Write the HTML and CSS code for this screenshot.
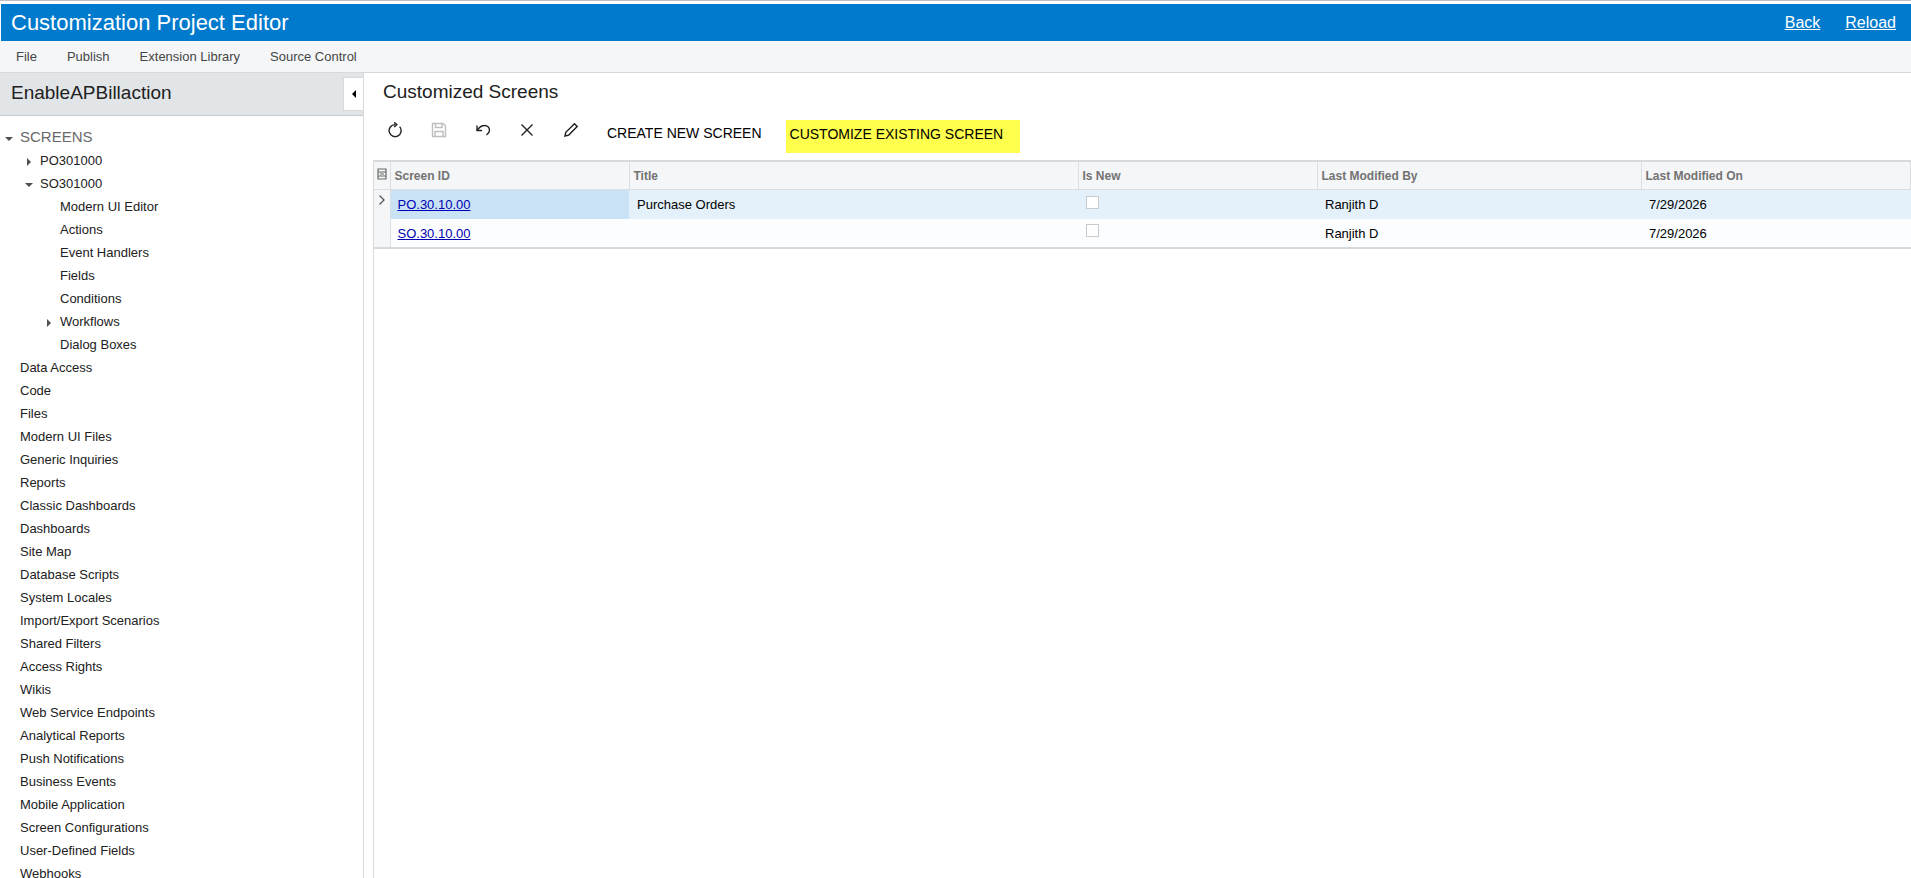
FILE: index.html
```html
<!DOCTYPE html>
<html lang="en">

<head>
    <meta charset="UTF-8">
    <title>Customization Project Editor</title>
    <link rel="stylesheet" href="styles.css">
</head>

<body>
    <header class="topBar">
        <span class="appTitle">Customization Project Editor</span>
        <nav class="topLinks">
            <a href="#">Back</a>
            <a href="#">Reload</a>
        </nav>
    </header>
    <nav class="menuBar">
        <span>File</span>
        <span>Publish</span>
        <span>Extension Library</span>
        <span>Source Control</span>
    </nav>
    <div class="workspace">
        <aside class="sidePanel">
            <div class="projectBar">
                <span class="projectName">EnableAPBillaction</span>
                <button class="collapseBtn"><i class="arrow arrowLeft"></i></button>
            </div>
            <ul class="tree">
                <li class="rootNode"><i class="arrow arrowDown"></i>SCREENS</li>
                <li class="level1"><i class="arrow arrowRight"></i>PO301000</li>
                <li class="level1"><i class="arrow arrowDown"></i>SO301000</li>
                <li class="level2">Modern UI Editor</li>
                <li class="level2">Actions</li>
                <li class="level2">Event Handlers</li>
                <li class="level2">Fields</li>
                <li class="level2">Conditions</li>
                <li class="level2"><i class="arrow arrowRight"></i>Workflows</li>
                <li class="level2">Dialog Boxes</li>
                <li>Data Access</li>
                <li>Code</li>
                <li>Files</li>
                <li>Modern UI Files</li>
                <li>Generic Inquiries</li>
                <li>Reports</li>
                <li>Classic Dashboards</li>
                <li>Dashboards</li>
                <li>Site Map</li>
                <li>Database Scripts</li>
                <li>System Locales</li>
                <li>Import/Export Scenarios</li>
                <li>Shared Filters</li>
                <li>Access Rights</li>
                <li>Wikis</li>
                <li>Web Service Endpoints</li>
                <li>Analytical Reports</li>
                <li>Push Notifications</li>
                <li>Business Events</li>
                <li>Mobile Application</li>
                <li>Screen Configurations</li>
                <li>User-Defined Fields</li>
                <li>Webhooks</li>
            </ul>
        </aside>
        <main class="content">
            <h1 class="pageTitle">Customized Screens</h1>
            <div class="toolbar">
                <button class="toolBtn">
                    <svg viewBox="0 0 16 16"><path d="M12.600 4.600A6 6 0 1 1 8 2.600" /><path d="M7.200 .4 9.800 2.600 7.200 5" /></svg>
                </button>
                <button class="toolBtn disabled">
                    <svg viewBox="0 0 16 16"><path d="M1.500 1.500h10.500l2.500 2.500v10.500H1.500z" /><path d="M4.500 1.500v4h6.500v-4M4 14.500V9.500h8v5" /></svg>
                </button>
                <button class="toolBtn">
                    <svg viewBox="0 0 16 16"><path d="M2 3.500V8.500H7" /><path d="M2 8.500C4 5.500 6.500 3.500 9.500 3.500A4.800 4.800 0 0 1 14.500 8.300C14.500 10.500 13 12 11.500 13" /></svg>
                </button>
                <button class="toolBtn">
                    <svg viewBox="0 0 16 16"><path d="M2.500 2.500l11 11M13.500 2.500l-11 11" /></svg>
                </button>
                <button class="toolBtn">
                    <svg viewBox="0 0 16 16"><path d="M2 14l.8-3.700L11.500 1.800l2.700 2.700-8.500 8.600z" /></svg>
                </button>
                <button class="textBtn">CREATE NEW SCREEN</button>
                <button class="textBtn highlighted">CUSTOMIZE EXISTING SCREEN</button>
            </div>
            <div class="gridPanel">
                <table class="grid">
                    <colgroup>
                        <col class="colMark">
                        <col class="colId">
                        <col class="colTitle">
                        <col class="colNew">
                        <col class="colBy">
                        <col class="colOn">
                    </colgroup>
                    <thead>
                        <tr>
                            <th class="markCell">
                                <svg class="gridIcon" viewBox="0 0 10 12"><path d="M1 1h8v10H1zM1 4h8M1 8h8M3 6h4" /></svg>
                            </th>
                            <th>Screen ID</th>
                            <th>Title</th>
                            <th>Is New</th>
                            <th>Last Modified By</th>
                            <th>Last Modified On</th>
                        </tr>
                    </thead>
                    <tbody>
                        <tr class="activeRow">
                            <td class="markCell">
                                <svg class="rowIcon" viewBox="0 0 8 12"><path d="M1.500 1.500 6 6l-4.500 4.500" /></svg>
                            </td>
                            <td class="activeCell idCell"><a href="#">PO.30.10.00</a></td>
                            <td>Purchase Orders</td>
                            <td><span class="checkBox"></span></td>
                            <td>Ranjith D</td>
                            <td>7/29/2026</td>
                        </tr>
                        <tr class="lastRow">
                            <td class="markCell"></td>
                            <td class="idCell"><a href="#">SO.30.10.00</a></td>
                            <td></td>
                            <td><span class="checkBox"></span></td>
                            <td>Ranjith D</td>
                            <td>7/29/2026</td>
                        </tr>
                    </tbody>
                </table>
            </div>
        </main>
    </div>
</body>

</html>
```
FILE: styles.css
```css
html, body {
    margin: 0;
    height: 100%;
    overflow: hidden;
    background-color: white;
}

body {
    display: flex;
    flex-direction: column;
    font-family: "Liberation Sans", Arial, sans-serif;
    font-size: 13px;
    color: rgb(33, 33, 33);
    border-top: 1px solid rgb(190, 190, 190);
    padding-top: 3px;
    box-sizing: border-box;
}

.topBar {
    flex: none;
    height: 37px;
    margin-left: 1px;
    padding: 0 15px 0 10px;
    display: flex;
    align-items: center;
    justify-content: space-between;
    background-color: rgb(0, 122, 204);
    color: white;
}

.appTitle {
    font-size: 22px;
}

.topLinks {
    display: flex;
    gap: 25px;
}

.topLinks a {
    color: white;
    font-size: 16px;
}

.menuBar {
    flex: none;
    height: 31px;
    padding-left: 16px;
    display: flex;
    align-items: center;
    gap: 30px;
    background-color: rgb(245, 246, 247);
    border-bottom: 1px solid rgb(215, 218, 221);
    color: rgb(70, 70, 70);
}

.workspace {
    flex: 1;
    display: flex;
    min-height: 0;
}

.sidePanel {
    flex: none;
    width: 364px;
    box-sizing: border-box;
    border-right: 1px solid rgb(215, 218, 221);
}

.projectBar {
    height: 42px;
    padding-left: 11px;
    display: flex;
    align-items: center;
    justify-content: space-between;
    background-color: rgb(225, 229, 232);
    border-bottom: 1px solid rgb(200, 203, 206);
    font-size: 19px;
}

.projectName {
    margin-bottom: 2px;
}

.collapseBtn {
    width: 20px;
    height: 34px;
    padding: 0;
    border: 1px solid rgb(215, 218, 221);
    border-right: none;
    background-color: white;
    display: flex;
    align-items: center;
    justify-content: center;
}

.tree {
    list-style: none;
    margin: 10px 0 0 0;
    padding: 0;
}

.tree li {
    height: 23px;
    line-height: 23px;
    padding-left: 20px;
    position: relative;
    white-space: nowrap;
}

.tree .rootNode {
    line-height: 22px;
    color: rgb(105, 105, 105);
    font-size: 15px;
}

.tree .level1 {
    padding-left: 40px;
}

.tree .level2 {
    padding-left: 60px;
}

.arrow {
    position: absolute;
    width: 0;
    height: 0;
    border-style: solid;
    border-color: transparent;
}

.arrowDown {
    top: 11px;
    margin-left: -15px;
    border-width: 4px 4px 0 4px;
    border-top-color: rgb(80, 80, 80);
}

.arrowRight {
    top: 9px;
    margin-left: -13px;
    border-width: 4px 0 4px 4.500px;
    border-left-color: rgb(80, 80, 80);
}

.arrowLeft {
    position: static;
    display: block;
    border-width: 4.500px 4.500px 4.500px 0;
    border-right-color: black;
}

.content {
    flex: 1;
    min-width: 0;
    padding-left: 9px;
    display: flex;
    flex-direction: column;
}

.pageTitle {
    margin: 7px 0 0 10px;
    height: 24px;
    line-height: 24px;
    font-size: 19px;
    font-weight: normal;
}

.toolbar {
    margin-top: 9px;
    height: 41px;
    display: flex;
    align-items: flex-start;
}

.toolBtn {
    width: 44px;
    height: 34px;
    padding: 0;
    border: none;
    background: none;
    display: flex;
    align-items: center;
    justify-content: center;
}

.toolBtn svg {
    width: 16px;
    height: 16px;
    fill: none;
    stroke: rgb(33, 33, 33);
    stroke-width: 1.400;
}

.toolBtn.disabled svg {
    stroke: rgb(190, 190, 190);
}

.textBtn {
    height: 40px;
    margin-left: 10px;
    padding: 0 4px;
    border: none;
    background: none;
    font: inherit;
    font-size: 14px;
    color: black;
}

.textBtn.highlighted {
    width: 234px;
    height: 33px;
    margin: 7px 0 0 20px;
    padding-bottom: 6px;
    text-align: left;
    background-color: rgb(255, 255, 77);
}

.gridPanel {
    flex: 1;
    margin-top: 6px;
    border-left: 1px solid rgb(215, 218, 221);
}

.grid {
    width: 100%;
    table-layout: fixed;
    border-collapse: collapse;
    border-top: 2px solid rgb(215, 218, 221);
    border-bottom: 2px solid rgb(215, 218, 221);
}

.colMark { width: 16px; }
.colId { width: 239px; }
.colTitle { width: 449px; }
.colNew { width: 239px; }
.colBy { width: 324px; }

.grid th {
    height: 27px;
    padding: 0 0 0 4px;
    text-align: left;
    font-size: 12px;
    color: rgb(115, 115, 115);
    background-color: rgb(245, 246, 247);
    border-right: 1px solid rgb(220, 223, 226);
    border-bottom: 1px solid rgb(220, 223, 226);
}

.grid td {
    height: 29px;
    padding: 0 0 0 8px;
    background-color: rgb(251, 253, 254);
    color: black;
}

.grid .lastRow td {
    height: 28px;
}

.grid .idCell {
    padding-left: 7px;
}

.grid .activeRow td {
    background-color: rgb(228, 241, 250);
}

.grid .activeRow .activeCell {
    background-color: rgb(201, 226, 245);
}

.grid .markCell,
.grid .activeRow .markCell {
    padding: 0;
    text-align: center;
    background-color: rgb(245, 246, 247);
    border-right: 1px solid rgb(220, 223, 226);
}

.grid a {
    color: rgb(0, 0, 180);
}

.gridIcon {
    width: 10px;
    height: 12px;
    fill: none;
    stroke: rgb(105, 105, 105);
    stroke-width: 1.200;
}

.rowIcon {
    width: 8px;
    height: 12px;
    margin-bottom: 6px;
    fill: none;
    stroke: rgb(80, 80, 80);
    stroke-width: 1.200;
}

.checkBox {
    display: block;
    width: 11px;
    height: 11px;
    margin-bottom: 5px;
    background-color: white;
    border: 1px solid rgb(200, 203, 206);
}
```
